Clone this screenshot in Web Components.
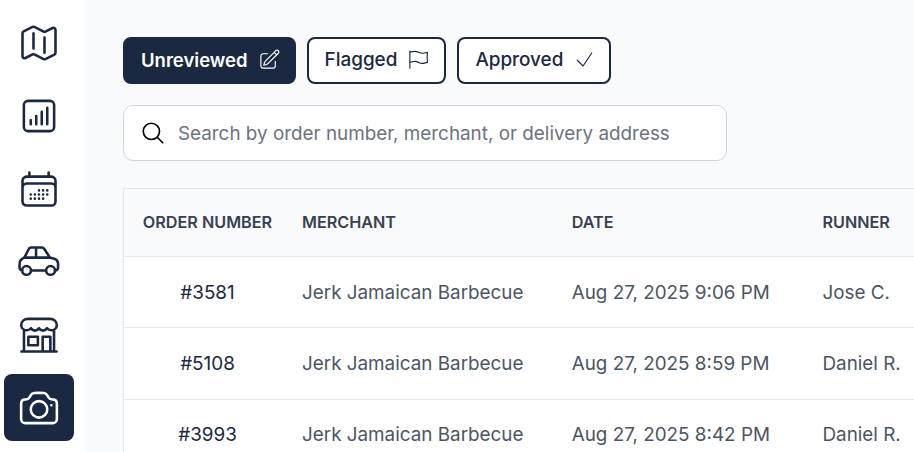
<!DOCTYPE html>
<html>
<head>
<meta charset="utf-8">
<style>
  html, body { margin: 0; height: 100%; overflow: hidden; }
  body { font-family: Inter, "Liberation Sans", sans-serif; background: #f9fafb; }
</style>
</head>
<body>
<orders-page>
  <side-nav slot="nav">
    <nav-item icon="map"></nav-item>
    <nav-item icon="chart"></nav-item>
    <nav-item icon="calendar"></nav-item>
    <nav-item icon="car"></nav-item>
    <nav-item icon="store"></nav-item>
    <nav-item icon="camera" active></nav-item>
  </side-nav>
  <filter-tab icon="pencil" active>Unreviewed</filter-tab>
  <filter-tab icon="flag" style="padding-right: 14px">Flagged</filter-tab>
  <filter-tab icon="check">Approved</filter-tab>
  <search-box slot="search" placeholder="Search by order number, merchant, or delivery address"></search-box>
  <orders-table slot="table">
    <order-row head order="ORDER NUMBER" merchant="MERCHANT" date="DATE" runner="RUNNER"></order-row>
    <order-row order="#3581" merchant="Jerk Jamaican Barbecue" date="Aug 27, 2025 9:06 PM" runner="Jose C."></order-row>
    <order-row order="#5108" merchant="Jerk Jamaican Barbecue" date="Aug 27, 2025 8:59 PM" runner="Daniel R."></order-row>
    <order-row order="#3993" merchant="Jerk Jamaican Barbecue" date="Aug 27, 2025 8:42 PM" runner="Daniel R."></order-row>
  </orders-table>
</orders-page>

<script>
const ICONS = {
  map: 'M9 6.75V15m6-6v8.25m.503 3.498 4.875-2.437c.381-.19.622-.58.622-1.006V4.82c0-.836-.88-1.38-1.628-1.006l-3.869 1.934c-.317.159-.69.159-1.006 0L9.503 3.252a1.125 1.125 0 0 0-1.006 0L3.622 5.689C3.24 5.88 3 6.27 3 6.695V19.18c0 .836.88 1.38 1.628 1.006l3.869-1.934c.317-.159.69-.159 1.006 0l4.994 2.497c.317.158.69.158 1.006 0Z',
  chart: 'M7.5 14.25v2.25m3-4.5v4.5m3-6.75v6.75m3-9v9M6 20.25h12A2.25 2.25 0 0 0 20.25 18V6A2.25 2.25 0 0 0 18 3.75H6A2.25 2.25 0 0 0 3.75 6v12A2.25 2.25 0 0 0 6 20.25Z',
  calendar: 'M6.75 3v2.25M17.25 3v2.25M3 18.75V7.5a2.25 2.25 0 0 1 2.25-2.25h13.5A2.25 2.25 0 0 1 21 7.5v11.25m-18 0A2.25 2.25 0 0 0 5.25 21h13.5A2.25 2.25 0 0 0 21 18.75m-18 0v-7.5A2.25 2.25 0 0 1 5.25 9h13.5A2.25 2.25 0 0 1 21 11.25v7.5m-9-6h.008v.008H12v-.008ZM12 15h.008v.008H12V15Zm0 2.25h.008v.008H12v-.008ZM9.75 15h.008v.008H9.75V15Zm0 2.25h.008v.008H9.75v-.008ZM7.5 15h.008v.008H7.5V15Zm0 2.25h.008v.008H7.5v-.008Zm6.75-4.5h.008v.008h-.008v-.008Zm0 2.25h.008v.008h-.008V15Zm0 2.25h.008v.008h-.008v-.008Zm2.25-4.5h.008v.008H16.5v-.008Zm0 2.25h.008v.008H16.5V15Z',
  car: 'M3 16.6h-.1a1.5 1.5 0 0 1-1.5-1.5v-1.9c0-1.7 1-3 2.6-3.5l2.2-4.4c.3-.7.9-1.2 1.6-1.2h5.6c.7 0 1.2.3 1.6.9l2.9 4.5 2.4.7c1.3.4 2.1 1.5 2.1 2.9v2a1.5 1.5 0 0 1-1.5 1.5h-.3M7.6 16.6h8.3M3.8 9.6h14M10.4 4.1v5.5M5.2 14.2a2.4 2.4 0 1 1 0 4.8 2.4 2.4 0 0 1 0-4.8ZM18.3 14.2a2.4 2.4 0 1 1 0 4.8 2.4 2.4 0 0 1 0-4.8Z',
  store: 'M6 3.2h12c2.1 0 3.7 1.5 3.7 3.3 0 1.6-1.3 2.9-2.9 2.9-1 0-1.8-.4-2.4-1.1-.5.8-1.3 1.3-2.2 1.3s-1.7-.5-2.2-1.3c-.5.8-1.3 1.3-2.2 1.3s-1.7-.5-2.2-1.3c-.6.7-1.4 1.1-2.4 1.1-1.6 0-2.9-1.3-2.9-2.9 0-1.8 1.6-3.3 3.7-3.3ZM3.8 9.2V21M20.2 9.2V21M2.4 21h19.2M6.2 13h5.2v4.6H6.2ZM14 21v-8h4.2v8',
  camera: 'M6.827 6.175A2.31 2.31 0 0 1 5.186 7.23c-.38.054-.757.112-1.134.175C2.999 7.58 2.25 8.507 2.25 9.574V18a2.25 2.25 0 0 0 2.25 2.25h15A2.25 2.25 0 0 0 21.75 18V9.574c0-1.067-.75-1.994-1.802-2.169a47.865 47.865 0 0 0-1.134-.175 2.31 2.31 0 0 1-1.64-1.055l-.822-1.316a2.192 2.192 0 0 0-1.736-1.039 48.774 48.774 0 0 0-5.232 0 2.192 2.192 0 0 0-1.736 1.039l-.821 1.316Z M16.5 12.75a4.5 4.5 0 1 1-9 0 4.5 4.5 0 0 1 9 0ZM18.75 10.5h.008v.008h-.008V10.5Z',
  pencil: 'm16.862 4.487 1.687-1.688a1.875 1.875 0 1 1 2.652 2.652L10.582 16.07a4.5 4.5 0 0 1-1.897 1.13L6 18l.8-2.685a4.5 4.5 0 0 1 1.13-1.897l8.932-8.931Zm0 0L19.5 7.125M18 14v4.75A2.25 2.25 0 0 1 15.75 21H5.25A2.25 2.25 0 0 1 3 18.75V8.25A2.25 2.25 0 0 1 5.25 6H10',
  flag: 'M3 3v1.5M3 21v-6m0 0 2.77-.693a9 9 0 0 1 6.208.682l.108.054a9 9 0 0 0 6.086.71l3.114-.732a48.524 48.524 0 0 1-.005-10.499l-3.11.732a9 9 0 0 1-6.085-.711l-.108-.054a9 9 0 0 0-6.208-.682L3 4.5M3 15V4.5',
  check: 'm4.5 12.75 6 6 9-13.5',
  search: 'm21 21-5.197-5.197m0 0A7.5 7.5 0 1 0 5.196 5.196a7.5 7.5 0 0 0 10.607 10.607Z'
};

function iconSvg(name, size, width) {
  return `<svg width="${size}" height="${size}" viewBox="0 0 24 24" fill="none" stroke="currentColor" stroke-width="${width}" stroke-linecap="round" stroke-linejoin="round"><path d="${ICONS[name]}"/></svg>`;
}

class OrdersPage extends HTMLElement {
  constructor() {
    super();
    this.attachShadow({mode: 'open'}).innerHTML = `
    <style>
      :host { display: flex; height: 452px; width: 914px; overflow: hidden; }
      main { flex: 1; min-width: 0; padding: 37px 0 0 38px; display: flex; flex-direction: column; }
      .tabs { display: flex; gap: 11px; margin-bottom: 21px; }
      .search { display: block; margin-bottom: 27px; }
    </style>
    <slot name="nav"></slot>
    <main>
      <div class="tabs"><slot></slot></div>
      <div class="search"><slot name="search"></slot></div>
      <slot name="table"></slot>
    </main>`;
  }
}
customElements.define('orders-page', OrdersPage);

class SideNav extends HTMLElement {
  constructor() {
    super();
    this.attachShadow({mode: 'open'}).innerHTML = `
    <style>
      :host { display: flex; flex-direction: column; gap: 6px; box-sizing: border-box; width: 85px; flex: none; height: 100%; padding: 9px 11px 0 4px; background: #fff; }
    </style>
    <slot></slot>`;
  }
}
customElements.define('side-nav', SideNav);

class NavItem extends HTMLElement {
  constructor() {
    super();
    const active = this.hasAttribute('active');
    this.attachShadow({mode: 'open'}).innerHTML = `
    <style>
      :host { display: flex; align-items: center; justify-content: center; height: 67px; border-radius: 8px; color: ${active ? '#fff' : '#1b2842'}; background: ${active ? '#1b2842' : 'transparent'}; }
      svg { display: block; }
    </style>
    ${iconSvg(this.getAttribute('icon'), 44, 1.4)}`;
  }
}
customElements.define('nav-item', NavItem);

class FilterTab extends HTMLElement {
  constructor() {
    super();
    const active = this.hasAttribute('active');
    this.attachShadow({mode: 'open'}).innerHTML = `
    <style>
      :host { display: flex; align-items: center; gap: 10px; box-sizing: border-box; height: 47px; padding: 0 13px 2px 16px; border: 2px solid #1b2842; border-radius: 8px; font-size: ${active ? 18.5 : 18.9}px; font-weight: ${active ? 600 : 500}; color: ${active ? '#fff' : '#1b2842'}; background: ${active ? '#1b2842' : '#fff'}; }
      svg { display: block; }
    </style>
    <slot></slot>${iconSvg(this.getAttribute('icon'), 23, 1.2)}`;
  }
}
customElements.define('filter-tab', FilterTab);

class SearchBox extends HTMLElement {
  constructor() {
    super();
    this.attachShadow({mode: 'open'}).innerHTML = `
    <style>
      :host { display: flex; align-items: center; gap: 12px; box-sizing: border-box; width: 604px; height: 56px; padding: 0 16px; background: #fff; border: 1px solid #d1d5db; border-radius: 10px; color: #000; }
      svg { display: block; flex: none; }
      span { font-size: 18.85px; color: #6b7280; white-space: nowrap; }
    </style>
    ${iconSvg('search', 26, 1.5)}<span>${this.getAttribute('placeholder')}</span>`;
  }
}
customElements.define('search-box', SearchBox);

class OrdersTable extends HTMLElement {
  constructor() {
    super();
    this.attachShadow({mode: 'open'}).innerHTML = `
    <style>
      :host { display: block; width: 900px; background: #fff; border: 1px solid #e5e7eb; }
    </style>
    <slot></slot>`;
  }
}
customElements.define('orders-table', OrdersTable);

class OrderRow extends HTMLElement {
  constructor() {
    super();
    const head = this.hasAttribute('head');
    const cols = ['merchant', 'date', 'runner'].map(k => `<div class="cell">${this.getAttribute(k)}</div>`).join('');
    this.attachShadow({mode: 'open'}).innerHTML = `
    <style>
      :host { display: grid; grid-template-columns: 167px 269.7px 250.8px 1fr; align-items: center; box-sizing: border-box; height: ${head ? 68 : 71.3}px; ${head ? 'padding-bottom: 2px;' : ''} border-bottom: 1px solid #e5e7eb; background: ${head ? '#f9fafb' : '#fff'}; color: ${head ? '#374151' : '#4b5563'}; font-size: ${head ? 16.2 : 18.85}px; font-weight: ${head ? 600 : 400}; white-space: nowrap; }
      .order { text-align: center; color: ${head ? '#374151' : '#1b2842'}; font-weight: ${head ? 600 : 400}; }
      .cell { padding-left: 11px; }
    </style>
    <div class="order">${this.getAttribute('order')}</div>${cols}`;
  }
}
customElements.define('order-row', OrderRow);
</script>
</body>
</html>
